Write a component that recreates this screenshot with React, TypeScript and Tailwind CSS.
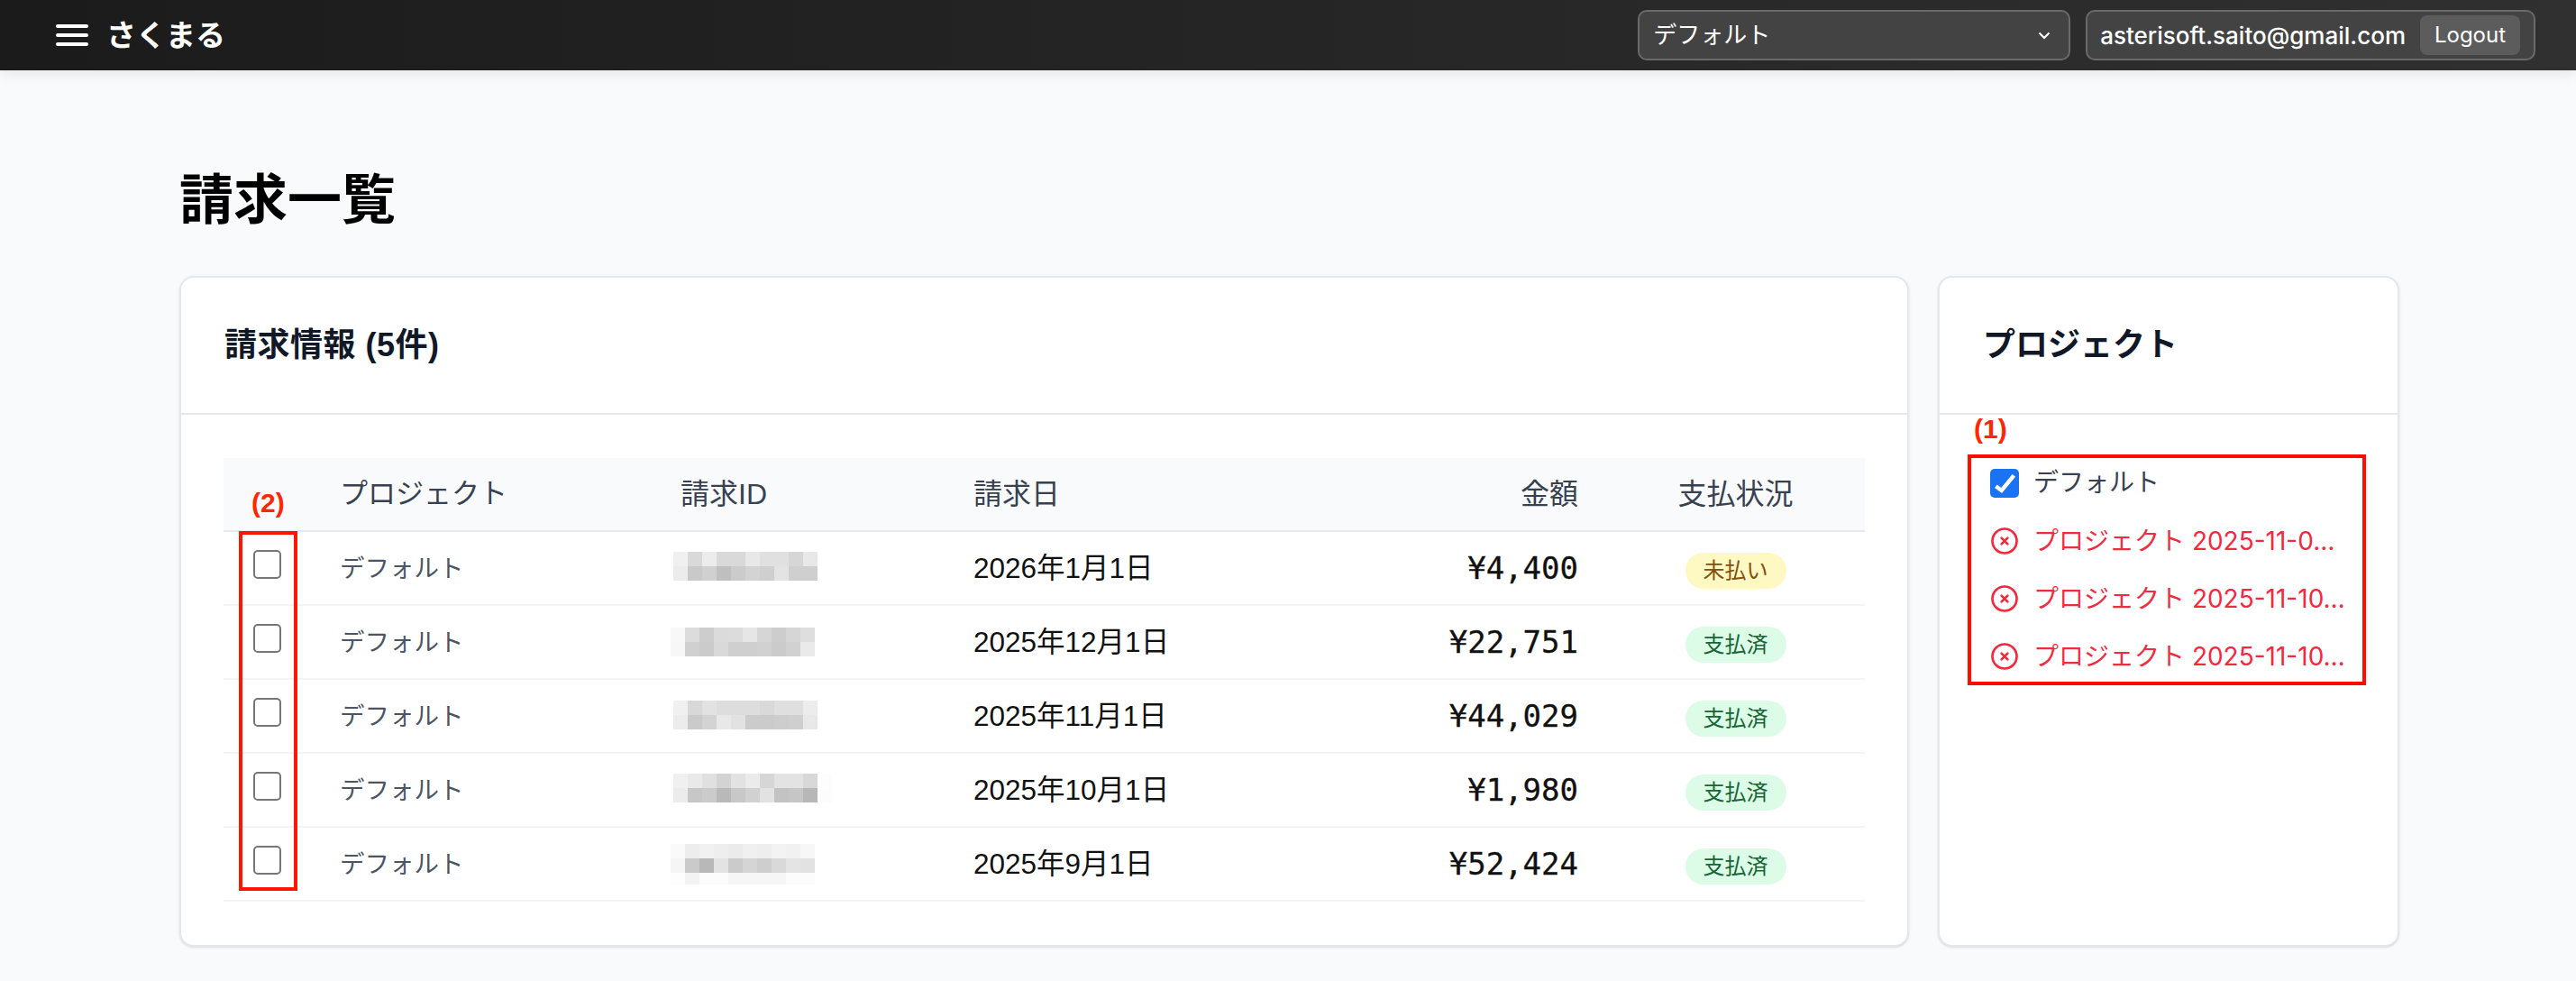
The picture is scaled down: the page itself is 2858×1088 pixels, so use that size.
import React from "react";

const gridCols = "grid grid-cols-[129px_378px_325px_703px_285px]";

type Invoice = {
  date: string;
  amount: string;
  paid: boolean;
  mosaic: { x: number; y: number; rows: string[] };
};

// blurred invoice ids, one string of gray values per mosaic line
const invoices: Invoice[] = [
  {
    date: "2026年1月1日",
    amount: "¥4,400",
    paid: false,
    mosaic: { x: 3, y: 22, rows: ["f0 d9 ec d9 d9 e8 e0 e0 d6 e8", "ec c9 d0 bf cb d3 cf e3 cf cf"] },
  },
  {
    date: "2025年12月1日",
    amount: "¥22,751",
    paid: true,
    mosaic: { x: 0, y: 24, rows: ["f8 dc cd db dc e6 d6 cd d6 de", "f7 d0 cb d9 cf cf d1 cb d1 ea"] },
  },
  {
    date: "2025年11月1日",
    amount: "¥44,029",
    paid: true,
    mosaic: { x: 3, y: 23, rows: ["f0 d8 e2 dd dd dd d9 df df ec", "ec ca d3 e8 e2 cb cb cd cf e8"] },
  },
  {
    date: "2025年10月1日",
    amount: "¥1,980",
    paid: true,
    mosaic: { x: 3, y: 22, rows: ["f0 e9 e0 d3 e2 eb d6 e3 e3 d8 fd", "ec c7 cb b9 c8 d1 e2 c3 c6 b7 fc"] },
  },
  {
    date: "2025年9月1日",
    amount: "¥52,424",
    paid: true,
    mosaic: {
      x: 0,
      y: 18,
      rows: ["fa ed f1 ee eb f0 ee f3 f1 f7", "f5 ca b8 e3 cb d5 ce d9 e4 e2", "fd f3 fc fc f6 f6 f6 f6 fc fc"],
    },
  },
];

const deletedProjects = [
  "プロジェクト 2025-11-0…",
  "プロジェクト 2025-11-10…",
  "プロジェクト 2025-11-10…",
];

const Mosaic: React.FC<{ data: Invoice["mosaic"] }> = ({ data }) => (
  <svg width="180" height="80" className="block -ml-[11px]">
    {data.rows.map((row, r) =>
      row.split(" ").map((v, c) => (
        <rect
          key={`${r}-${c}`}
          x={data.x + c * 16}
          y={data.y + r * 16}
          width="16"
          height={r === 2 ? 13 : 16}
          fill={`#${v}${v}${v}`}
        />
      ))
    )}
  </svg>
);

const XCircle = () => (
  <svg width="36" height="36" viewBox="0 0 24 24" fill="none" stroke="#ef2b3f" strokeWidth="1.8" strokeLinecap="round" strokeLinejoin="round" className="shrink-0">
    <path d="M9.75 9.75l4.5 4.5m0-4.5l-4.5 4.5M21 12a9 9 0 11-18 0 9 9 0 0118 0z" />
  </svg>
);

const Header = () => (
  <header className="h-[78px] flex items-center justify-between pl-[62px] pr-[45px] bg-linear-to-r from-[#1b1b1b] to-[#303030] shadow-[0_4px_14px_rgba(0,0,0,0.08)]">
    <div className="flex items-center gap-[20px]">
      <svg width="36" height="26" viewBox="0 0 36 26" fill="none" stroke="#ffffff" strokeWidth="4" strokeLinecap="round">
        <path d="M2 3h32M2 13h32M2 23h32" />
      </svg>
      <span className="text-[33px] leading-none font-bold text-white">さくまる</span>
    </div>
    <div className="flex items-center gap-[17px]">
      <div className="w-[480px] h-[56px] flex items-center justify-between pl-[15px] pr-[20px] bg-[#434343] border-2 border-[#6a6a6a] rounded-[10px]">
        <span className="text-[26px] text-white">デフォルト</span>
        <svg width="14" height="9" viewBox="0 0 14 9" fill="none" stroke="#ffffff" strokeWidth="2">
          <path d="M1.5 1.5L7 7l5.5-5.5" />
        </svg>
      </div>
      <div className="h-[56px] flex items-center gap-[16px] pl-[14px] pr-[15px] bg-[#434343] border-2 border-[#6a6a6a] rounded-[10px]">
        <span className="font-['Inter'] text-[26px] font-medium text-white">asterisoft.saito@gmail.com</span>
        <button className="w-[111px] h-[44px] bg-[#5c5c5c] rounded-[8px] font-['Inter'] text-[24px] text-white">Logout</button>
      </div>
    </div>
  </header>
);

const InvoiceCard = () => (
  <section className="relative flex-1 bg-white border-2 border-[#e5e7eb] rounded-[16px] shadow-sm">
    <div className="h-[152px] flex items-center px-[48px] border-b-2 border-[#e5e7eb]">
      <h2 className="text-[36px] font-bold tracking-[0.5px] text-[#111827]">請求情報 (5件)</h2>
    </div>
    <div className="px-[47px] pt-[48px] pb-[48px]">
      <div className={`${gridCols} h-[82px] items-center bg-[#f9fafb] border-b-2 border-[#e5e7eb] text-[32px] text-[#374151]`}>
        <div />
        <div className="text-[31px]">プロジェクト</div>
        <div>請求ID</div>
        <div className="flex justify-between pr-[32px]">
          <span>請求日</span>
          <span>金額</span>
        </div>
        <div className="text-center">支払状況</div>
      </div>
      {invoices.map((inv, i) => (
        <div key={i} className={`${gridCols} h-[82px] items-center border-b-2 border-[#f3f4f6]`}>
          <div className="pl-[33px] pb-[8px]">
            <input type="checkbox" className="block appearance-none w-[31px] h-[32px] bg-white border-2 border-[#767676] rounded-[5px]" />
          </div>
          <div className="pt-[2px] text-[27.5px] text-[#4b5563]">デフォルト</div>
          <Mosaic data={inv.mosaic} />
          <div className="flex items-center justify-between pr-[32px]">
            <span className="pt-[2px] text-[31.5px] text-[#111111]">{inv.date}</span>
            <span className="font-['DejaVu_Sans_Mono'] text-[34px] text-[#111111] [-webkit-text-stroke:0.3px_#111111]">{inv.amount}</span>
          </div>
          <div className="flex justify-center pt-[6px]">
            <span
              className={
                inv.paid
                  ? "w-[112px] h-[40px] flex items-center justify-center rounded-full bg-[#dcfce7] text-[24px] text-[#166534]"
                  : "w-[112px] h-[40px] flex items-center justify-center rounded-full bg-[#fef9c3] text-[24px] text-[#854d0e]"
              }
            >
              {inv.paid ? "支払済" : "未払い"}
            </span>
          </div>
        </div>
      ))}
    </div>
    {/* annotation */}
    <span className="absolute left-[78px] top-[235px] text-[30px] leading-[30px] font-bold text-[#ff2600]">(2)</span>
    <div className="absolute left-[64px] top-[281px] w-[65px] h-[399px] border-4 border-[#ff1500]" />
  </section>
);

const ProjectCard = () => (
  <aside className="relative w-[512px] bg-white border-2 border-[#e5e7eb] rounded-[16px] shadow-sm">
    <div className="h-[152px] flex items-center px-[48px] border-b-2 border-[#e5e7eb]">
      <h2 className="text-[36px] font-bold text-[#111827]">プロジェクト</h2>
    </div>
    <div className="flex flex-col gap-[24px] pt-[56px] pl-[54px] pr-[40px]">
      <div className="h-[40px] flex items-center gap-[16px] pl-[2px]">
        <span className="w-[32px] h-[32px] flex items-center justify-center bg-[#1a73f5] rounded-[5px]">
          <svg width="32" height="32" viewBox="0 0 32 32" fill="none" stroke="#ffffff" strokeWidth="4.5">
            <path d="M6.3 19.3L12.7 24L26.3 7.3" />
          </svg>
        </span>
        <span className="text-[28px] text-[#374151]">デフォルト</span>
      </div>
      {deletedProjects.map((name, i) => (
        <div key={i} className="h-[40px] flex items-center gap-[14px] text-[#ef2b3f]">
          <XCircle />
          <span className="whitespace-nowrap text-[28px] font-['Inter','Noto_Sans_CJK_JP',sans-serif]">{name}</span>
        </div>
      ))}
    </div>
    {/* annotation */}
    <span className="absolute left-[38px] top-[153px] text-[30px] leading-[30px] font-bold text-[#ff2600]">(1)</span>
    <div className="absolute left-[31px] top-[196px] w-[442px] h-[256px] border-4 border-[#ff0d00]" />
  </aside>
);

export default function App() {
  return (
    <div className="min-h-screen bg-[#f9fafb] font-['Liberation_Sans','Noto_Sans_CJK_JP',sans-serif]">
      <Header />
      <main className="pl-[199px] pr-[196px] pt-[115px]">
        <h1 className="text-[60px] leading-[60px] font-bold text-black mb-[53px]">請求一覧</h1>
        <div className="flex gap-[32px]">
          <InvoiceCard />
          <ProjectCard />
        </div>
      </main>
    </div>
  );
}
